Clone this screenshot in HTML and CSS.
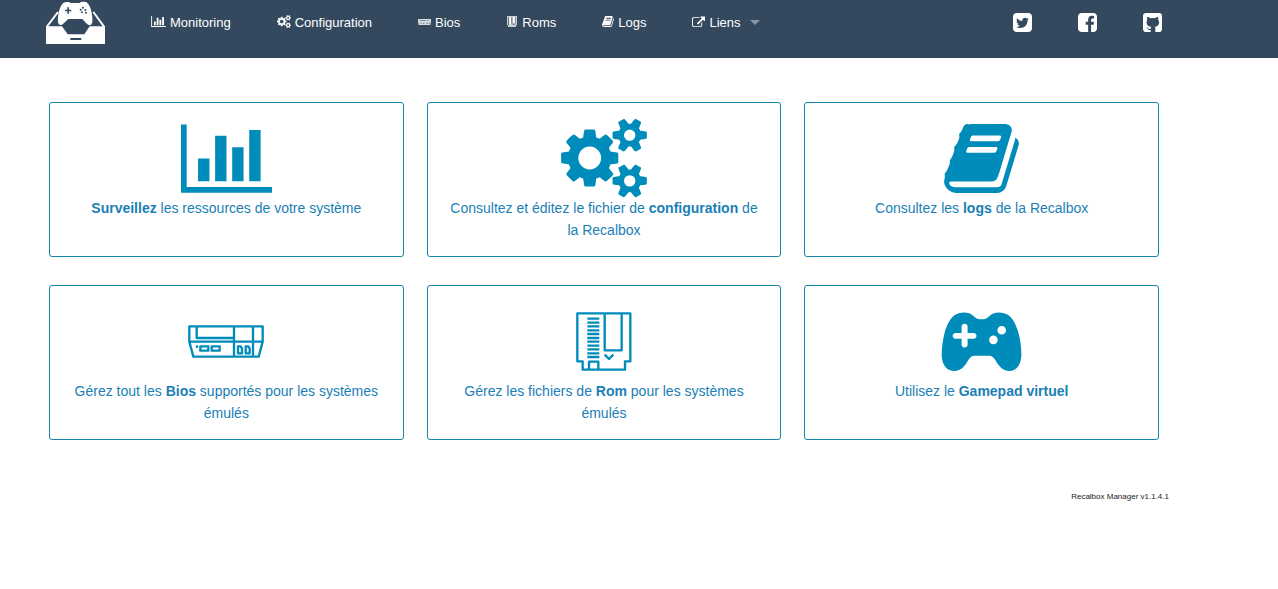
FILE: index.html
```html
<!DOCTYPE html>
<html lang="fr">
<head>
<meta charset="utf-8">
<meta name="viewport" content="width=device-width, initial-scale=1">
<title>Recalbox Manager</title>
<link rel="stylesheet" href="styles.css">
</head>
<body>
<svg class="sprite" aria-hidden="true">
  <symbol id="chart" viewBox="0 0 2048 1536"><path d="M640 768v512h-256v-512h256zm384-512v1024h-256v-1024h256zm1024 1152v128h-2048v-1536h128v1408h1920zm-640-896v768h-256v-768h256zm384-384v1152h-256v-1152h256z"/></symbol>
  <symbol id="cogs" viewBox="0 0 1920 1792"><path d="M896 896q0-106-75-181t-181-75-181 75-75 181 75 181 181 75 181-75 75-181zm768 512q0-52-38-90t-90-38-90 38-38 90q0 53 37.500 90.500t90.500 37.500 90.500-37.500 37.500-90.500zm0-1024q0-52-38-90t-90-38-90 38-38 90q0 53 37.500 90.500t90.500 37.500 90.500-37.500 37.500-90.500zm-384 421v185q0 10-7 19.500t-16 10.500l-155 24q-11 35-32 76 34 48 90 115 7 11 7 20 0 12-7 19-23 30-82.500 89.500t-78.500 59.500q-11 0-21-7l-115-90q-37 19-77 31-11 108-23 155-7 24-30 24h-186q-11 0-20-7.500t-10-17.500l-23-153q-34-10-75-31l-118 89q-7 7-20 7-11 0-21-8-144-133-144-160 0-9 7-19 10-14 41-53t47-61q-23-44-35-82l-152-24q-10-1-17-9.500t-7-19.500v-185q0-10 7-19.500t16-10.500l155-24q11-35 32-76-34-48-90-115-7-11-7-20 0-12 7-20 22-30 82-89t79-59q11 0 21 7l115 90q34-18 77-32 11-108 23-154 7-24 30-24h186q11 0 20 7.500t10 17.500l23 153q34 10 75 31l118-89q8-7 20-7 11 0 21 8 144 133 144 160 0 8-7 19-12 16-42 54t-45 60q23 48 34 82l152 23q10 2 17 10.500t7 19.500zm640 533v140q0 16-149 31-12 27-30 52 51 113 51 138 0 4-4 7-122 71-124 71-8 0-46-47t-52-68q-20 2-30 2t-30-2q-14 21-52 68t-46 47q-2 0-124-71-4-3-4-7 0-25 51-138-18-25-30-52-149-15-149-31v-140q0-16 149-31 13-29 30-52-51-113-51-138 0-4 4-7 4-2 35-20t59-34 30-16q8 0 46 46.500t52 67.500q20-2 30-2t30 2q51-71 92-112l6-2q4 0 124 70 4 3 4 7 0 25-51 138 17 23 30 52 149 15 149 31zm0-1024v140q0 16-149 31-12 27-30 52 51 113 51 138 0 4-4 7-122 71-124 71-8 0-46-47t-52-68q-20 2-30 2t-30-2q-14 21-52 68t-46 47q-2 0-124-71-4-3-4-7 0-25 51-138-18-25-30-52-149-15-149-31v-140q0-16 149-31 13-29 30-52-51-113-51-138 0-4 4-7 4-2 35-20t59-34 30-16q8 0 46 46.500t52 67.500q20-2 30-2t30 2q51-71 92-112l6-2q4 0 124 70 4 3 4 7 0 25-51 138 17 23 30 52 149 15 149 31z"/></symbol>
  <symbol id="book" viewBox="64 128 1664 1536"><path d="M1703 478q40 57 18 129l-275 906q-19 64-76.500 107.500t-122.500 43.500h-923q-77 0-148.500-53.500t-99.500-131.500q-24-67-2-127 0-4 3-27t4-37q1-8-3-21.500t-3-19.500q2-11 8-21t16.500-23.500 16.500-23.500q23-38 45-91.500t30-91.500q3-10 .5-30t-.5-28q3-11 17-28t17-23q21-36 42-92t25-90q1-9-2.500-32t.5-28q4-13 22-30.500t22-22.500q19-26 42.500-84.500t27.500-96.500q1-8-3-25.500t-2-26.500q2-8 9-18t18-23 17-21q8-12 16.500-30.500t15-35 16-36 19.500-32 26.500-23.500 36-11.500 47.500 5.500l-1 3q38-9 51-9h761q74 0 114 56t18 130l-274 906q-36 119-71.500 153.500t-128.500 34.500h-869q-27 0-38 15-11 16-1 43 24 70 144 70h923q29 0 56-15.500t35-41.500l300-987q7-22 5-57 38 15 59 43zm-1064 2q-4 13 2 22.500t20 9.500h608q13 0 25.500-9.500t16.500-22.500l21-64q4-13-2-22.500t-20-9.500h-608q-13 0-25.500 9.500t-16.500 22.500zm-83 256q-4 13 2 22.500t20 9.500h608q13 0 25.500-9.500t16.500-22.500l21-64q4-13-2-22.500t-20-9.500h-608q-13 0-25.500 9.500t-16.500 22.500z"/></symbol>
  <symbol id="console" viewBox="0 0 228 99">
    <g fill="none" stroke="currentColor" stroke-width="7" stroke-linejoin="round">
      <path d="M4 4h220v46l-12 45H16L4 50zM4 50h220M138 4v91M195 4v91"/>
      <path d="M26 4v35h112"/>
      <path d="M37 64h24v13H37zM71 64h24v13H71zM150 64h8l4 6v15h-12zM173 64h8l4 6v15h-12z"/>
    </g>
    <circle cx="27" cy="65" r="4"/>
  </symbol>
  <symbol id="cartridge" viewBox="0 0 168 177">
    <g fill="none" stroke="currentColor" stroke-width="7" stroke-linejoin="round">
      <path d="M4 4h159v144h-16v25H20v-25H4zM86 4v111h51V4M39 173v-24h28v24M86 128l13 13 13-13"/>
      <path d="M34 20h36M34 32h36M34 43h36M34 55h36M34 66h36M34 78h36M34 89h36M34 101h36M34 112h36M34 124h36M34 135h36"/>
    </g>
  </symbol>
  <symbol id="console-small" viewBox="0 0 39 18">
    <path opacity="0.8" d="M0 0h39v8l-2 10H2L0 8z"/>
    <path class="cutout" opacity="0.7" d="M5 3h18v2H5zM27 3h5v2h-5zM7 11h4v3H7zM15 11h4v3h-4zM26 11h3v4h-3zM32 11h3v4h-3z"/>
  </symbol>
  <symbol id="cartridge-small" viewBox="0 0 30 33">
    <path opacity="0.75" d="M0 0h30v28h-3v5H3v-5H0z"/>
    <path class="cutout" opacity="0.7" d="M3 3h3v24H3zM13 3h3v20h-3zM25 3h2v20h-2zM16 23h9v3h-9z"/>
    <path d="M7 3h5v21H7zM18 3h5v17h-5z"/>
  </symbol>
  <symbol id="gamepad" viewBox="34 38 242 178"><path fill-rule="evenodd" d="M76 46c19-10 41-9 54 3l8 7c6 5 28 5 34 0l8-7c13-12 35-13 54-3 15 9 25 29 32 53 7 25 10 51 9 73-2 27-16 44-36 44-18 0-31-13-41-31-6-10-12-15-19-15h-46c-7 0-13 5-19 15-10 18-22 31-41 31-21 0-36-16-38-44-1-22 3-48 9-73 7-24 17-44 32-53zM95 82v19H77c-12 0-12 18 0 18h18v18c0 11 18 11 18 0v-18h18c12 0 12-18 0-18h-18V82c0-11-18-11-18 0zM229 93a13 13 0 1 0-26 0 13 13 0 1 0 26 0zM204 122a13 13 0 1 0-26 0 13 13 0 1 0 26 0z"/></symbol>
  <symbol id="external" viewBox="0 64 1792 1536"><path d="M1408 928v320q0 119-84.500 203.500t-203.500 84.500h-832q-119 0-203.500-84.500t-84.500-203.500v-832q0-119 84.500-203.500t203.500-84.500h704q14 0 23 9t9 23v64q0 14-9 23t-23 9h-704q-66 0-113 47t-47 113v832q0 66 47 113t113 47h832q66 0 113-47t47-113v-320q0-14 9-23t23-9h64q14 0 23 9t9 23zm384-800v512q0 26-19 45t-45 19-45-19l-176-176-652 652q-10 10-23 10t-23-10l-114-114q-10-10-10-23t10-23l652-652-176-176q-19-19-19-45t19-45 45-19h512q26 0 45 19t19 45z"/></symbol>
  <symbol id="twitter" viewBox="128 128 1536 1536"><path d="M1408 610q-56 25-121 34 68-40 93-117-65 38-134 51-61-66-153-66-87 0-148.500 61.500t-61.500 148.500q0 29 5 48-129-7-242-65t-192-155q-29 50-29 106 0 114 91 175-47-1-100-26v2q0 75 50 133.500t123 72.500q-29 8-51 8-13 0-39-4 21 63 74.500 104t121.500 42q-116 90-261 90-26 0-50-3 148 94 322 94 112 0 210-35.500t168-95 120.500-137 75-162 24.500-168.500q0-18-1-27 63-45 105-109zm256-194v960q0 119-84.500 203.500t-203.500 84.500h-960q-119 0-203.500-84.500t-84.500-203.500v-960q0-119 84.500-203.500t203.500-84.500h960q119 0 203.500 84.500t84.500 203.500z"/></symbol>
  <symbol id="facebook" viewBox="128 128 1536 1536"><path d="M1376 128q119 0 203.500 84.500t84.500 203.500v960q0 119-84.500 203.500t-203.500 84.500h-188v-595h199l30-232h-229v-148q0-56 23.500-84t91.500-28l122-1v-207q-63-9-178-9-136 0-217.500 80t-81.500 226v171h-200v232h200v595h-532q-119 0-203.500-84.500t-84.500-203.500v-960q0-119 84.500-203.500t203.500-84.500h960z"/></symbol>
  <symbol id="github" viewBox="0 0 57 57"><rect width="57" height="57" rx="10"/><path class="cutout" d="M13 12c4 0 7 2 9 4q7-2 14 0c2-2 5-4 9-4 1 3 1 6 0 8 3 3 4 7 3 11-1 7-6 10-13 11 2 2 2 4 2 6v9H23v-6c-6 1-8-1-10-5l-3-3c4-1 6 5 9 5 2 0 4 0 4-1q0-3 2-5c-8-1-13-4-14-11-1-4 1-8 2-11-1-2-2-5 0-8z"/></symbol>
</svg>

<header class="topbar">
  <a class="logo" href="#" aria-label="Recalbox Manager">
    <svg viewBox="48 0 177 132" aria-hidden="true">
      <path d="M84 36L50 81M190 36l33 45" fill="none" stroke="currentColor" stroke-width="6"/>
      <path d="M48 79h48l17 24h50l16-24h46v53H48z"/>
      <path d="M101 8c8-4 18-2 22 1h25c6-4 17-5 24 0 10 8 17 38 15 57-1 10-9 12-16 6l-14-15h-42L99 72c-6 6-14 3-15-6-2-20 5-50 17-58z"/>
      <path class="cutout" d="M112 22h5v7h7v5h-7v7h-5v-7h-7v-5h7zM121 114h33v6h-33z"/>
      <g class="cutout"><circle cx="159" cy="23" r="3"/><circle cx="152" cy="29" r="3"/><circle cx="166" cy="30" r="3"/><circle cx="156" cy="37" r="3"/><circle cx="168" cy="38" r="3"/></g>
    </svg>
  </a>
  <nav class="menu" aria-label="Navigation principale">
    <a href="#"><svg class="i-chart" aria-hidden="true"><use href="#chart"/></svg>Monitoring</a>
    <a href="#"><svg class="i-cogs" aria-hidden="true"><use href="#cogs"/></svg>Configuration</a>
    <a href="#"><svg class="i-console" aria-hidden="true"><use href="#console-small"/></svg>Bios</a>
    <a href="#"><svg class="i-cartridge" aria-hidden="true"><use href="#cartridge-small"/></svg>Roms</a>
    <a href="#"><svg class="i-book" aria-hidden="true"><use href="#book"/></svg>Logs</a>
    <button class="dropdown" type="button" aria-haspopup="true"><svg class="i-external" aria-hidden="true"><use href="#external"/></svg>Liens<span class="caret"></span></button>
  </nav>
  <div class="social">
    <a href="#" aria-label="Twitter"><svg aria-hidden="true"><use href="#twitter"/></svg></a>
    <a href="#" aria-label="Facebook"><svg aria-hidden="true"><use href="#facebook"/></svg></a>
    <a href="#" aria-label="GitHub"><svg aria-hidden="true"><use href="#github"/></svg></a>
  </div>
</header>

<main class="cards">
  <a class="card" href="#"><span class="picture"><svg class="p-chart" aria-hidden="true"><use href="#chart"/></svg></span><span><b>Surveillez</b> les ressources de votre système</span></a>
  <a class="card" href="#"><span class="picture"><svg class="p-cogs" aria-hidden="true"><use href="#cogs"/></svg></span><span>Consultez et éditez le fichier de <b>configuration</b> de la Recalbox</span></a>
  <a class="card" href="#"><span class="picture"><svg class="p-book" aria-hidden="true"><use href="#book"/></svg></span><span>Consultez les <b>logs</b> de la Recalbox</span></a>
  <a class="card" href="#"><span class="picture"><svg class="p-console" aria-hidden="true"><use href="#console"/></svg></span><span>Gérez tout les <b>Bios</b> supportés pour les systèmes émulés</span></a>
  <a class="card" href="#"><span class="picture"><svg class="p-cartridge" aria-hidden="true"><use href="#cartridge"/></svg></span><span>Gérez les fichiers de <b>Rom</b> pour les systèmes émulés</span></a>
  <a class="card" href="#"><span class="picture"><svg class="p-gamepad" aria-hidden="true"><use href="#gamepad"/></svg></span><span>Utilisez le <b>Gamepad virtuel</b></span></a>
</main>

<footer class="version">Recalbox Manager v1.1.4.1</footer>
</body>
</html>
```
FILE: styles.css
```css
* { box-sizing: border-box; }

body {
  margin: 0;
  background: #fff;
  color: #222;
  font-family: "Liberation Sans", Arial, sans-serif;
}

a { color: inherit; text-decoration: none; }
svg { display: block; flex: none; fill: currentColor; }
.sprite { position: absolute; width: 0; height: 0; }

.topbar {
  display: flex;
  align-items: flex-start;
  gap: 46px;
  padding: 0 116px 13px 46px;
  background: #34495e;
  color: #fff;
  font-size: 13px;
}
.cutout { fill: #34495e; }
.logo svg { width: 59px; height: 44px; }

.menu, .social { display: flex; align-items: center; gap: 46px; height: 45px; }
.menu a, .dropdown { display: flex; align-items: center; gap: 4px; }
.menu svg { margin-bottom: 2px; }
.dropdown { padding: 0; border: 0; background: none; color: inherit; font: inherit; }
.caret {
  margin-left: 5px;
  border: 5px solid transparent;
  border-top-color: #8594a6;
  border-bottom: 0;
}
.social { margin-left: auto; }
.social svg { width: 19px; height: 19px; }

.i-chart { width: 15px; height: 11px; }
.i-cogs { width: 14px; height: 13px; }
.i-console { width: 13px; height: 6px; }
.i-cartridge { width: 12px; height: 11px; }
.i-book { width: 12px; height: 11px; }
.i-external { width: 13px; height: 12px; }

.cards {
  display: grid;
  grid-template-columns: repeat(3, 1fr);
  gap: 28px 23px;
  padding: 44px 119px 0 49px;
}
.card {
  min-height: 155px;
  padding: 16px 18px 15px;
  border: 1px solid #1585a8;
  border-radius: 3px;
  color: #1a80b6;
  font-size: 14px;
  line-height: 22px;
  text-align: center;
}
.picture {
  display: flex;
  align-items: center;
  justify-content: center;
  height: 78px;
  color: #008cba;
}
.p-chart { width: 91px; height: 69px; }
.p-cogs { width: 86px; height: 80px; }
.p-book { width: 75px; height: 69px; }
.p-console { width: 76px; height: 33px; }
.p-cartridge { width: 56px; height: 59px; }
.p-gamepad { width: 81px; height: 59px; }

.version {
  padding: 50px 109px 0 0;
  font-size: 8px;
  line-height: 14px;
  text-align: right;
}
```
